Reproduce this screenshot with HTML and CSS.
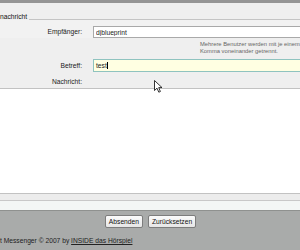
FILE: index.html
```html
<!DOCTYPE html>
<html lang="de">
<head>
  <meta charset="UTF-8" />
  <title>Neue Nachricht</title>
  <link rel="stylesheet" href="styles.css">
</head>
<body>
  <div class="topbar"></div>
  <div class="legend"><span>nachricht</span></div>

  <div class="row row-to">
    <label>Empfänger:</label>
    <div class="field"><input type="text" value="djblueprint" /></div>
  </div>
  <div class="row row-hint">
    <div></div>
    <div class="hint">Mehrere Benutzer werden mit je einem<br>Komma voneinander getrennt.</div>
  </div>
  <div class="row row-subject">
    <label>Betreff:</label>
    <div class="field"><div class="input focus">test<i class="caret"></i></div></div>
  </div>
  <div class="row row-msg">
    <label>Nachricht:</label>
    <div></div>
  </div>

  <div class="textarea"></div>
  <div class="band"></div>
  <div class="band light"></div>

  <div class="footer">
    <div class="actions">
      <button>Absenden</button>
      <button>Zurücksetzen</button>
    </div>
    <p class="copy">t Messenger © 2007 by <a href="#">INSIDE das Hörspiel</a></p>
  </div>

  <svg class="pointer" width="9" height="13" viewBox="0 0 9 13">
    <path d="M0.5 0.5 L0.5 10.5 L3 8.2 L4.8 12.2 L6.4 11.5 L4.7 7.6 L8 7.6 Z" fill="#fff" stroke="#000" stroke-width="0.8" stroke-linejoin="round"/>
  </svg>
</body>
</html>
```

FILE: styles.css
```css
html, body {
  margin: 0;
  width: 300px;
  height: 250px;
  overflow: hidden;
}
body {
  position: relative;
  background: #efefef;
  font-family: "Liberation Sans", Arial, sans-serif;
  font-size: 6.7px;
  color: #222;
}
.topbar {
  height: 3px;
  background: #959595;
}
.legend {
  height: 17px;
  display: flex;
  align-items: flex-end;
}
.legend span {
  line-height: 8px;
  padding-right: 2px;
  margin-bottom: -1px;
  color: #111;
}
.legend::after {
  content: "";
  flex: 1;
  border-bottom: 1px solid #c4c4c4;
}
.row {
  display: grid;
  grid-template-columns: 82px 1fr;
  column-gap: 11px;
}
.row label {
  text-align: right;
  color: #222;
}
.row-to {
  height: 18px;
  background: #f2f2f2;
}
.row-to label {
  padding-top: 8px;
}
.row-to .field {
  padding-top: 6px;
}
.row-to input {
  box-sizing: border-box;
  width: 210px;
  height: 12px;
  border: 1px solid #a9a9a9;
  background: #fff;
  padding: 0 2px;
  font: inherit;
  color: #222;
  outline: none;
}
.row-hint {
  height: 21px;
}
.hint {
  padding: 3px 0 0 107px;
  font-size: 5.8px;
  line-height: 7px;
  color: #666;
  white-space: nowrap;
}
.row-subject {
  height: 16px;
}
.row-subject label {
  padding-top: 3px;
}
.input {
  box-sizing: border-box;
  width: 210px;
  height: 13px;
  border: 1px solid #8fc3bf;
  padding: 2px 2px 0;
  line-height: 8px;
}
.input.focus {
  background: #ffffe2;
}
.caret {
  display: inline-block;
  width: 1px;
  height: 7px;
  background: #000;
  vertical-align: -1px;
}
.row-msg {
  height: 13px;
}
.row-msg label {
  padding-top: 3px;
}
.textarea {
  height: 104px;
  background: #fff;
  border-top: 1px solid #c2c2c2;
  border-bottom: 1px solid #c2c2c2;
}
.band {
  height: 6px;
  background: #ececec;
  border-bottom: 1px solid #c8c8c8;
}
.band.light {
  height: 9px;
  background: #f3f6f5;
  border-bottom: 1px solid #8f918f;
}
.footer {
  height: 43px;
  background: #a9abaa;
  padding-top: 4px;
  box-sizing: border-box;
}
.actions {
  display: flex;
  justify-content: center;
  gap: 5px;
  padding-left: 1px;
}
.actions button {
  height: 13px;
  padding: 0 3px;
  border: 1px solid #7d7d7d;
  border-radius: 2px;
  background: linear-gradient(#fbfbfb, #e6e6e6);
  font: inherit;
  font-size: 6.7px;
  color: #111;
}
.copy {
  margin: 9px 0 0;
  font-size: 6.7px;
  line-height: 8px;
  color: #222;
  white-space: nowrap;
}
.copy a {
  color: #222;
}
.pointer {
  position: absolute;
  left: 154px;
  top: 80px;
}
```
